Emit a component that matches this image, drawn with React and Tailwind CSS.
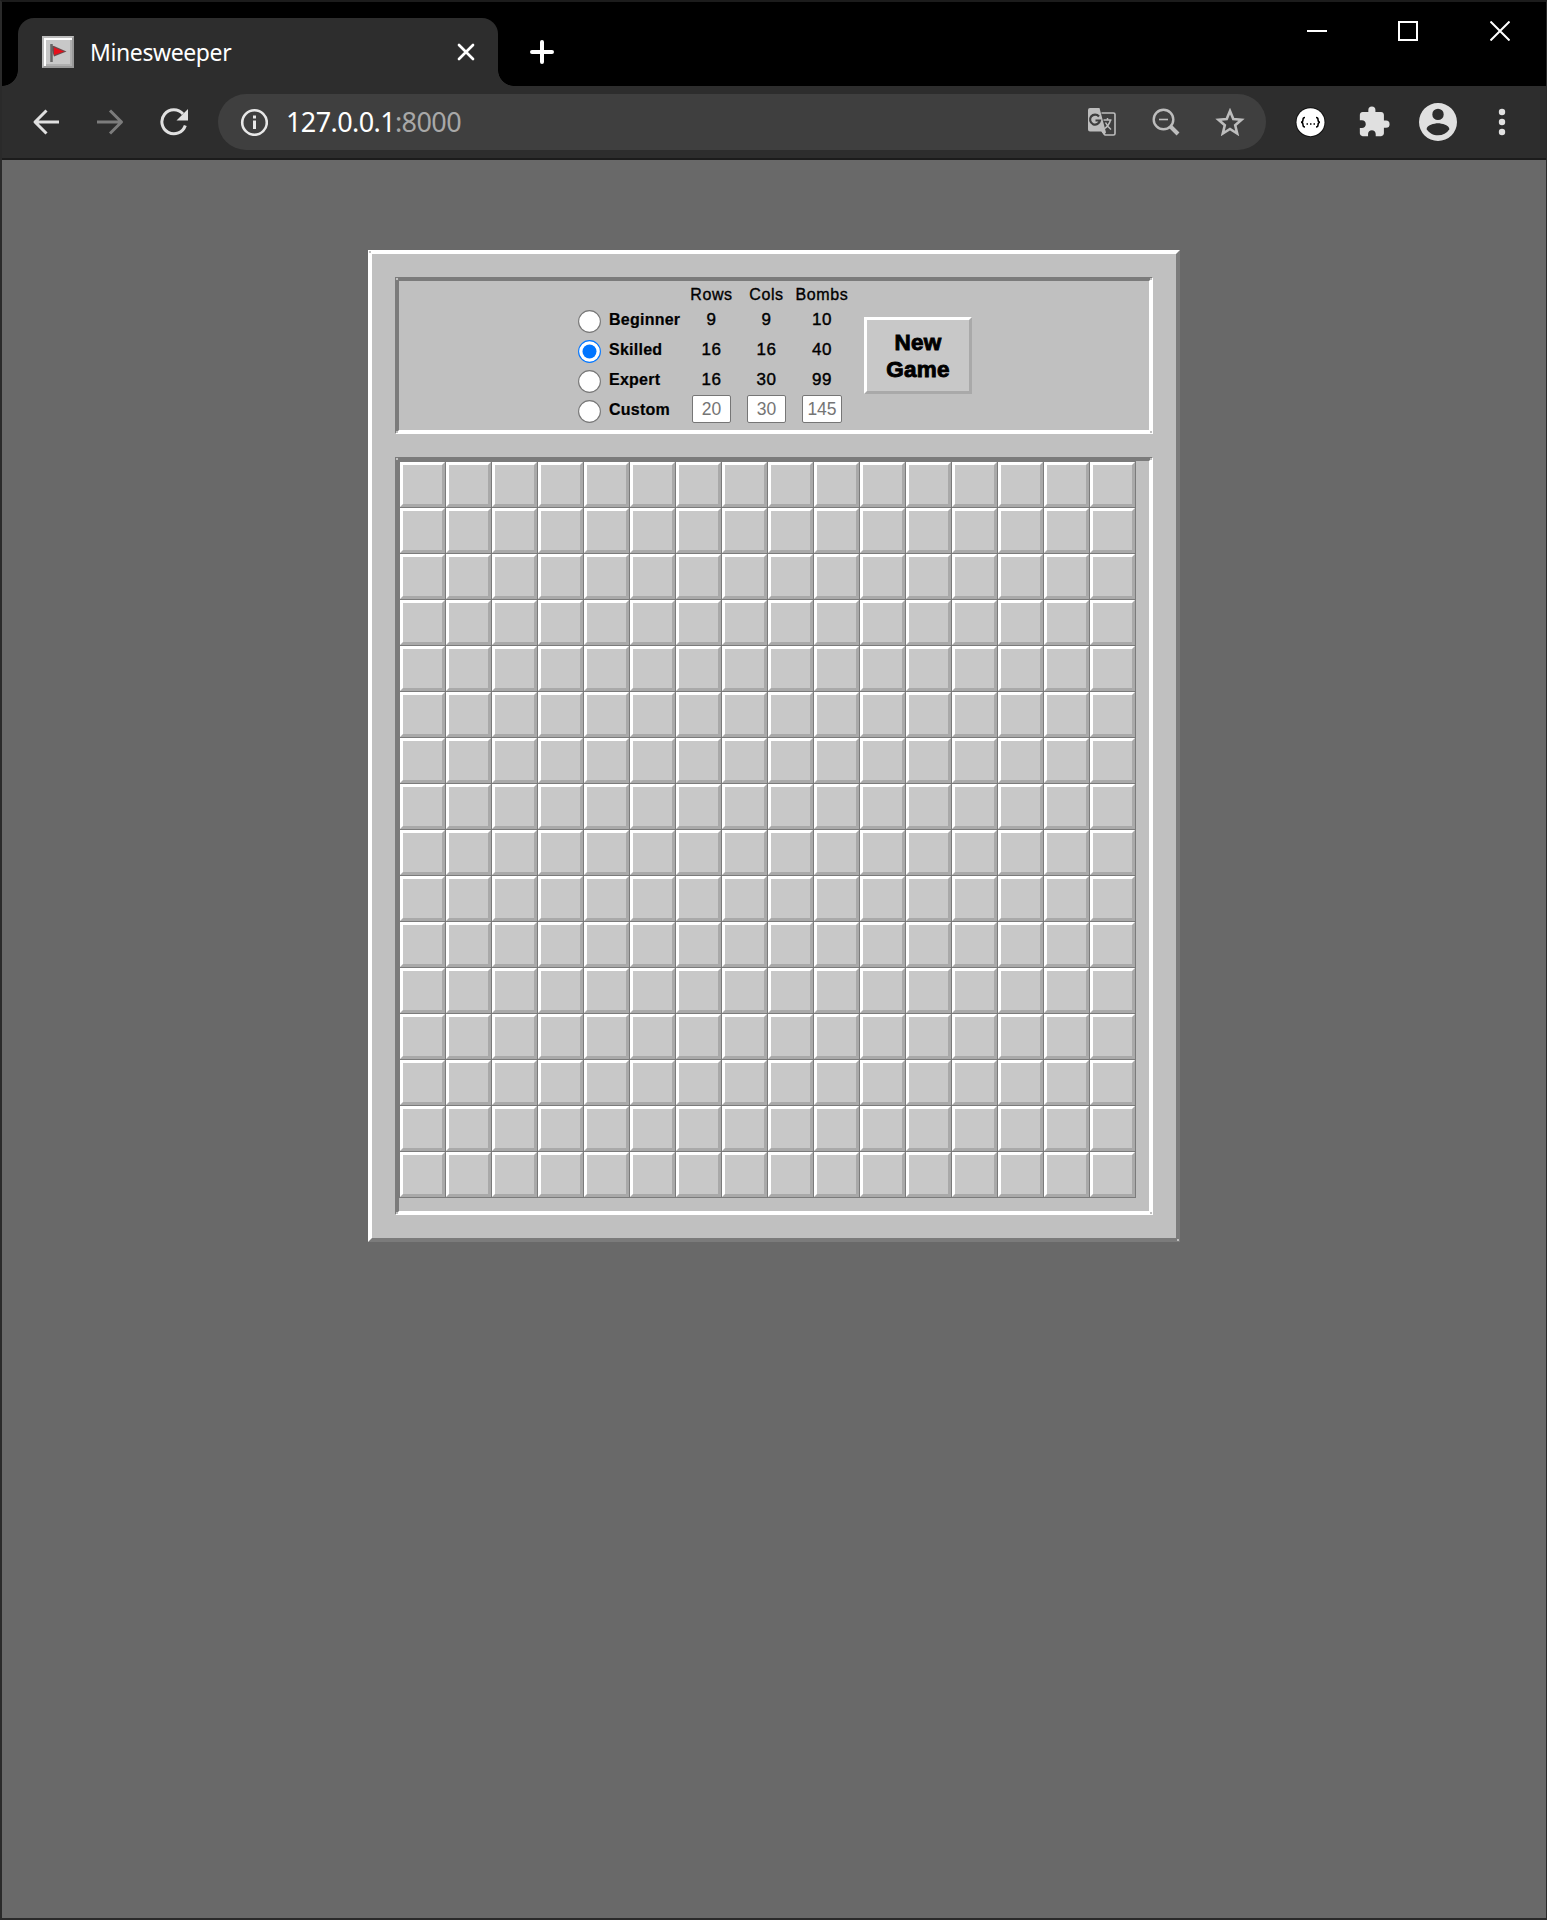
import React, { useState } from "react";

const presets = [
  { name: "Beginner", rows: 9, cols: 9, bombs: 10 },
  { name: "Skilled", rows: 16, cols: 16, bombs: 40 },
  { name: "Expert", rows: 16, cols: 30, bombs: 99 },
];

function TitleBar() {
  return (
    <div className="flex h-[84px] items-start bg-black">
      <div className="relative ml-4 mt-4 flex h-[68px] w-[480px] shrink-0 items-center rounded-t-[16px] bg-[#2d2d2d] pl-6">
        <span className="absolute -left-4 bottom-0 h-4 w-4 bg-[radial-gradient(circle_at_0_0,#000_15.5px,#2d2d2d_16.2px)]" />
        <span className="absolute -right-4 bottom-0 h-4 w-4 bg-[radial-gradient(circle_at_100%_0,#000_15.5px,#2d2d2d_16.2px)]" />
        <svg width="32" height="32" viewBox="0 0 32 32">
          <rect width="32" height="32" fill="#999" />
          <path d="M0 32V0H32L30 2H2V30Z" fill="#bdbdbd" />
          <rect x="2" y="2" width="28" height="28" fill="#c8c8c8" />
          <path d="M2 30V2H30V4H4V30Z" fill="#fff" />
          <path d="M4 30V28H28V4H30V30Z" fill="#b0b0b0" />
          <path d="M8.500 9.500L12 10L24.500 15.500L12 20.500Z" fill="#6d4a4c" />
          <path d="M12 11.500L22 15.500L12 19Z" fill="#e8101c" />
          <path d="M9.500 8V26" stroke="#666" strokeWidth="2.500" />
        </svg>
        <span className="-mt-px ml-4 w-[300px] font-['Noto_Sans'] text-[23px] leading-8 tracking-[-0.4px] text-white">Minesweeper</span>
        <svg className="absolute left-[439px] top-[25px]" width="18" height="18" viewBox="0 0 18 18" fill="none" stroke="#fff" strokeWidth="2.700" strokeLinecap="round">
          <path d="M2 2L16 16M16 2L2 16" />
        </svg>
      </div>
      <svg className="ml-8 mt-[38px]" width="24" height="24" viewBox="0 0 24 24" stroke="#fff" strokeWidth="4" strokeLinecap="round">
        <path d="M2 12H22M12 2V22" />
      </svg>
      <div className="ml-auto mr-[36px] mt-[19px] flex">
        <svg className="mr-[71px]" width="20" height="20" viewBox="0 0 20 20"><path d="M0 10H20" stroke="#fff" strokeWidth="2" /></svg>
        <svg className="mr-[72px]" width="20" height="20" viewBox="0 0 20 20"><rect x="1" y="1" width="18" height="18" fill="none" stroke="#fff" strokeWidth="2" /></svg>
        <svg width="20" height="20" viewBox="0 0 20 20"><path d="M0.500 0.500L19.500 19.500M19.500 0.500L0.500 19.500" stroke="#fff" strokeWidth="2" /></svg>
      </div>
    </div>
  );
}

function TranslateIcon() {
  return (
    <svg width="28" height="28" viewBox="0 0 28 28">
      <path d="M13.500 5H25.500Q27 5 27 6.500V25.500Q27 27 25.500 27H17L14 23" fill="none" stroke="#bdbdbd" strokeWidth="1.600" />
      <path d="M15.500 12H23.500M19.500 10V12M22.500 12C21.500 16 19 19 16 21M17.500 14.500C19 17.500 20.500 19.500 23 21.500" fill="none" stroke="#bdbdbd" strokeWidth="1.500" />
      <path d="M2 0H11.500L18 24.500L16 27L13.500 23.500H2Q0 23.500 0 21.500V2Q0 0 2 0Z" fill="#bdbdbd" />
      <path d="M11 8.500A5 5 0 1 0 12 12.500H7.500" fill="none" stroke="#3f3f3f" strokeWidth="2.200" />
    </svg>
  );
}

function Toolbar() {
  return (
    <div className="flex h-[74px] items-center border-b-2 border-[#1c1c1c] bg-[#2d2d2d]">
      <svg className="ml-[30px]" width="28" height="28" viewBox="0 0 28 28" fill="none" stroke="#e0e0e0" strokeWidth="3" strokeLinejoin="round">
        <path d="M27 14H3M14.500 2.500L3 14L14.500 25.500" />
      </svg>
      <svg className="ml-[37px]" width="28" height="28" viewBox="0 0 28 28" fill="none" stroke="#7c7c7c" strokeWidth="3" strokeLinejoin="round">
        <path d="M0 14H24.500M13 2.500L24.500 14L13 25.500" />
      </svg>
      <svg className="ml-[35px]" width="30" height="28" viewBox="0 0 30 28">
        <path d="M25.300 17.500A12 12 0 1 1 23 6" fill="none" stroke="#e0e0e0" strokeWidth="3" />
        <path d="M28 1V12.500H16.500Z" fill="#e0e0e0" />
      </svg>
      <div className="ml-[28px] flex h-[56px] w-[1048px] shrink-0 items-center rounded-full bg-[#3f3f3f] pl-[22px]">
        <svg width="28" height="28" viewBox="0 0 28 28">
          <circle cx="14.500" cy="14.500" r="12.300" fill="none" stroke="#e8e8e8" strokeWidth="2.600" />
          <path d="M14.500 7.500V10.500M14.500 12.500V21" stroke="#e8e8e8" strokeWidth="3" />
        </svg>
        <span className="ml-[18px] font-['Noto_Sans'] text-[27px] leading-8 tracking-[-0.6px] text-white">
          127.0.0.1<span className="text-[#a8a8a8]">:8000</span>
        </span>
        <div className="ml-auto mr-[21px] flex items-center">
          <TranslateIcon />
          <svg className="ml-[36px]" width="28" height="28" viewBox="0 0 28 28" fill="none" stroke="#bdbdbd" strokeWidth="2.400">
            <circle cx="11.500" cy="11.500" r="9.800" />
            <path d="M7 11.500H16" strokeWidth="1.600" />
            <path d="M18.500 18.500L26 26" strokeWidth="4" />
          </svg>
          <svg className="ml-[35px]" width="30" height="28" viewBox="0 0 30 28" fill="none" stroke="#bdbdbd" strokeWidth="2.600">
            <path d="M15 3L18.300 11L26.500 11.700L20.200 17.200L22.200 25.500L15 21L7.800 25.500L9.800 17.200L3.500 11.700L11.700 11Z" />
          </svg>
        </div>
      </div>
      <svg className="ml-[28px] shrink-0" width="32" height="32" viewBox="0 0 32 32">
        <circle cx="16.500" cy="16.200" r="15" fill="#111" />
        <circle cx="16.500" cy="16.200" r="14" fill="#fff" />
        <path d="M11 11.500Q9 11.500 9 13.500Q9 16.300 7 16.300Q9 16.300 9 19Q9 21 11 21M22 11.500Q24 11.500 24 13.500Q24 16.300 26 16.300Q24 16.300 24 19Q24 21 22 21" fill="none" stroke="#000" strokeWidth="1.500" />
        <path d="M12.500 18H14M16 18H17.500M19.500 18H21" stroke="#000" strokeWidth="1.500" />
      </svg>
      <svg className="ml-[31px] shrink-0" width="34" height="34" viewBox="0 0 24 24" fill="#e0e0e0">
        <path d="M20.500 11H19V7c0-1.100-.9-2-2-2h-4V3.500a2.500 2.500 0 0 0-5 0V5H4c-1.100 0-1.990.9-1.990 2v3.800H3.500c1.490 0 2.700 1.210 2.700 2.700s-1.210 2.700-2.700 2.700H2V20c0 1.100.9 2 2 2h3.800v-1.500c0-1.490 1.210-2.700 2.700-2.700s2.700 1.210 2.700 2.700V22H17c1.100 0 2-.9 2-2v-4h1.500a2.500 2.500 0 0 0 0-5z" />
      </svg>
      <svg className="ml-[28px] shrink-0" width="38" height="38" viewBox="2 2 20 20" fill="#e0e0e0">
        <path fillRule="evenodd" d="M12 2a10 10 0 1 0 0 20a10 10 0 0 0 0-20zm0 3a3 3 0 1 1 0 6a3 3 0 0 1 0-6zm0 14c-2.500 0-4.710-1.280-6-3.220c.03-1.990 4-3.080 6-3.080s5.970 1.090 6 3.080A7.200 7.200 0 0 1 12 19z" />
      </svg>
      <svg className="ml-[42px] shrink-0" width="6" height="26" viewBox="0 0 6 26" fill="#e0e0e0" overflow="visible">
        <circle cx="3" cy="3" r="3.200" />
        <circle cx="3" cy="13" r="3.200" />
        <circle cx="3" cy="23" r="3.200" />
      </svg>
    </div>
  );
}

function CornerDots({ inner }) {
  return (
    <>
      <i className="absolute -left-[3px] -top-[3px] h-[2px] w-[2px] bg-[#c0c0c0]" />
      <i className="absolute -bottom-[3px] -right-[3px] h-[2px] w-[2px] bg-[#c0c0c0]" />
      {inner && <i className="absolute -bottom-[3px] -left-[3px] h-[2px] w-[2px] bg-[#c0c0c0]" />}
      {inner && <i className="absolute -right-[3px] -top-[3px] h-[2px] w-[2px] bg-[#c0c0c0]" />}
    </>
  );
}

function Radio({ checked, onClick }) {
  return (
    <button type="button" role="radio" aria-checked={checked} onClick={onClick} className="mt-[4px] h-[23px] w-[23px]">
      <svg width="23" height="23" viewBox="0 0 23 23">
        <circle cx="11.500" cy="11.500" r="10.900" fill="#fff" stroke={checked ? "#0075ff" : "#767676"} strokeWidth="1.100" />
        {checked && <circle cx="11.500" cy="11.500" r="7" fill="#0075ff" />}
      </svg>
    </button>
  );
}

const heading = "text-[16px] tracking-[0.6px] [-webkit-text-stroke:0.35px_#000]";
const label = "pt-[3px] text-left font-bold tracking-[0.25px] [-webkit-text-stroke:0.2px_#000]";
const number = "pt-[3px] text-[17px] tracking-[0.5px] [-webkit-text-stroke:0.4px_#000]";

function Settings() {
  const [level, setLevel] = useState("Skilled");
  return (
    <div className="relative h-[157px] border-4 border-b-white border-l-[#7b7b7b] border-r-white border-t-[#7b7b7b]">
      <CornerDots inner />
      <div className="flex pl-[179px] pt-[3px]">
        <div className="grid grid-cols-[31px_72px_61px_49px_62px] grid-rows-[22px_30px_30px_30px_30px] text-center text-base leading-[22px]">
          <span className={`col-start-3 ${heading}`}>Rows</span>
          <span className={heading}>Cols</span>
          <span className={heading}>Bombs</span>
          {presets.map((p) => (
            <React.Fragment key={p.name}>
              <Radio checked={level === p.name} onClick={() => setLevel(p.name)} />
              <span className={label}>{p.name}</span>
              <span className={number}>{p.rows}</span>
              <span className={number}>{p.cols}</span>
              <span className={number}>{p.bombs}</span>
            </React.Fragment>
          ))}
          <Radio checked={level === "Custom"} onClick={() => setLevel("Custom")} />
          <span className={label}>Custom</span>
          {[20, 30, 145].map((v) => (
            <input
              key={v}
              placeholder={v}
              className={`-mt-px h-7 justify-self-center rounded-[2px] border border-[#767676] bg-white p-0 text-center text-[17.500px] text-black placeholder:text-[#757575] ${v === 145 ? "w-[40px]" : "w-[39px]"}`}
            />
          ))}
        </div>
        <button type="button" className="ml-[11px] mt-[33px] h-[77px] w-[108px] border-[3px] border-b-[#a9a9a9] border-l-white border-r-[#a9a9a9] border-t-white bg-[#c8c8c8] pt-px text-[22.500px] font-bold leading-[27px] tracking-[0.3px] [-webkit-text-stroke:0.9px_#000]">
          New
          <br />
          Game
        </button>
      </div>
    </div>
  );
}

function Board() {
  return (
    <div className="relative mt-[23px] h-[758px] border-4 border-b-white border-l-[#7b7b7b] border-r-white border-t-[#7b7b7b]">
      <CornerDots inner />
      <div className="grid w-[737px] grid-cols-[repeat(16,45px)] grid-rows-[repeat(16,45px)] gap-px bg-[#7b7b7b] p-px">
        {Array.from({ length: 256 }, (_, i) => (
          <div key={i} className="border-[3px] border-b-[#a9a9a9] border-l-white border-r-[#a9a9a9] border-t-white bg-[#c8c8c8]" />
        ))}
      </div>
    </div>
  );
}

export default function App() {
  return (
    <div className="h-[1920px] w-[1547px] overflow-hidden border-b-2 border-l-2 border-r border-t-2 border-b-[#2a2a2a] border-l-[#2a2a2a] border-r-[#2a2a2a] border-t-[#1c1c1c] bg-[#696969] font-['Liberation_Sans',sans-serif] text-black">
      <TitleBar />
      <Toolbar />
      <main className="flex justify-center pt-[90px]">
        <div className="relative h-[992px] w-[812px] border-4 border-b-[#7b7b7b] border-l-white border-r-[#7b7b7b] border-t-white bg-[#c0c0c0] p-[23px]">
          <CornerDots />
          <Settings />
          <Board />
        </div>
      </main>
    </div>
  );
}
